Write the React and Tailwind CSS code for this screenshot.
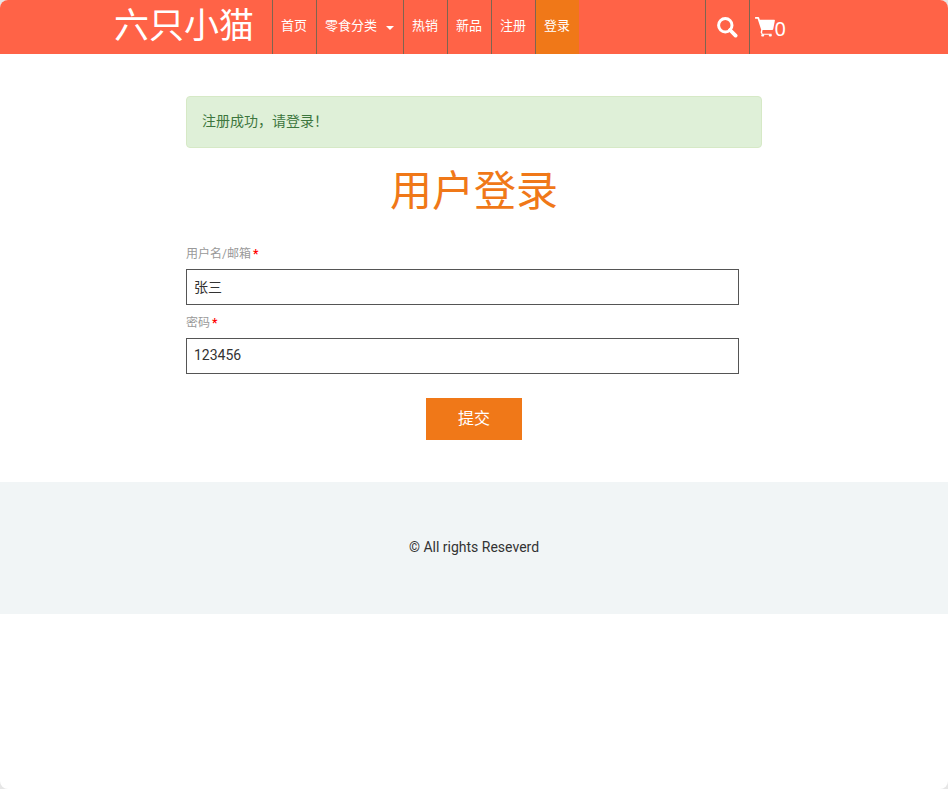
import React from "react";

const LINKS_AFTER = ["热销", "新品", "注册"];

function NavLink({ children, active = false }) {
  return (
    <a
      href="#"
      className={
        "flex items-center border-l border-[#7d6550] pb-0.5 pl-2 pr-[9px] text-[13px] leading-5 text-white " +
        (active ? "bg-[#f07818]" : "")
      }
    >
      {children}
    </a>
  );
}

function SearchIcon() {
  return (
    <svg viewBox="0 0 21 21" className="h-[21px] w-[21px]" fill="none" stroke="currentColor">
      <circle cx="8.3" cy="8.3" r="6.7" strokeWidth="3" />
      <path d="M13 13L18.6 18.6" strokeWidth="3.8" strokeLinecap="round" />
    </svg>
  );
}

function CartIcon() {
  return (
    <svg viewBox="0 0 20 20" className="h-5 w-5" fill="currentColor">
      <path d="M0.6 0H3.3Q3.9 0 4.1 0.6L4.8 2.8H19.3Q20 2.8 19.9 3.6L18.2 12.2Q18 13 17.2 13H7.6L7.1 15.4L7.6 16.8H16.6V17.8H7L5.6 15.6L6.2 12.8L2.6 1.8H0.6Q0 1.8 0 1.2V0.6Q0 0 0.6 0Z" />
      <rect x="6.2" y="17.2" width="3" height="2.4" rx="1" />
      <rect x="13.8" y="17.2" width="3" height="2.4" rx="1" />
    </svg>
  );
}

function Header() {
  return (
    <header className="bg-[#ff6347] text-white">
      <div className="mx-auto flex h-[54px] max-w-[720px]">
        <a href="#" className="mr-[18px] text-[35px] leading-[54px]">
          六只小猫
        </a>
        <nav className="flex">
          <NavLink>首页</NavLink>
          <NavLink>
            零食分类
            <span className="ml-[9px] mt-1 border-x-4 border-t-4 border-x-transparent border-t-white" />
          </NavLink>
          {LINKS_AFTER.map((label) => (
            <NavLink key={label}>{label}</NavLink>
          ))}
          <NavLink active>登录</NavLink>
        </nav>
        <div className="ml-auto flex pr-12">
          <button
            type="button"
            aria-label="Search"
            className="flex w-11 items-center justify-center border-l border-[#7d6550]"
          >
            <SearchIcon />
          </button>
          <a
            href="#"
            className="flex items-center border-l border-[#7d6550] pl-[5px] font-['Noto_Sans',sans-serif] text-xl"
          >
            <CartIcon />
            <span className="mt-1">0</span>
          </a>
        </div>
      </div>
    </header>
  );
}

function Field({ id, label, value }) {
  return (
    <div className="flex flex-col">
      <label htmlFor={id} className="mb-1.5 text-xs leading-[18px] text-[#999999]">
        {label}
        <span className="ml-0.5 font-bold text-[#ff0000]">*</span>
      </label>
      <input
        id={id}
        type="text"
        defaultValue={value}
        className="h-9 w-[96%] border border-[#555555] bg-white px-[7px] pb-0.5 text-sm text-[#333333] outline-none"
      />
    </div>
  );
}

export default function App() {
  return (
    <div className="min-h-screen bg-[#e6e6e6]">
      <div className="min-h-screen overflow-hidden rounded-lg bg-white font-[Roboto,'Noto_Sans_CJK_SC',sans-serif] text-sm text-[#333333]">
        <Header />
        <main className="mx-auto max-w-[720px] py-[42px]">
          <div className="mx-auto w-4/5">
            <div
              role="alert"
              className="rounded border border-[#d6e9c6] bg-[#dff0d8] px-[15px] pb-4 pt-3.5 leading-5 text-[#3c763d]"
            >
              注册成功，请登录！
            </div>
            <h1 className="mt-3.5 text-center text-[42px] leading-[60px] text-[#f07818]">用户登录</h1>
            <form className="mt-[23px]" onSubmit={(event) => event.preventDefault()}>
              <div className="flex flex-col gap-[9px]">
                <Field id="account" label="用户名/邮箱" value="张三" />
                <Field id="password" label="密码" value="123456" />
              </div>
              <div className="mt-6 flex justify-center">
                <button type="submit" className="h-[42px] w-24 bg-[#f07818] text-base text-white">
                  提交
                </button>
              </div>
            </form>
          </div>
        </main>
        <footer className="bg-[#f1f5f6] pb-[57px] pt-[55px] text-center leading-5">
          <p>© All rights Reseverd</p>
        </footer>
      </div>
    </div>
  );
}
